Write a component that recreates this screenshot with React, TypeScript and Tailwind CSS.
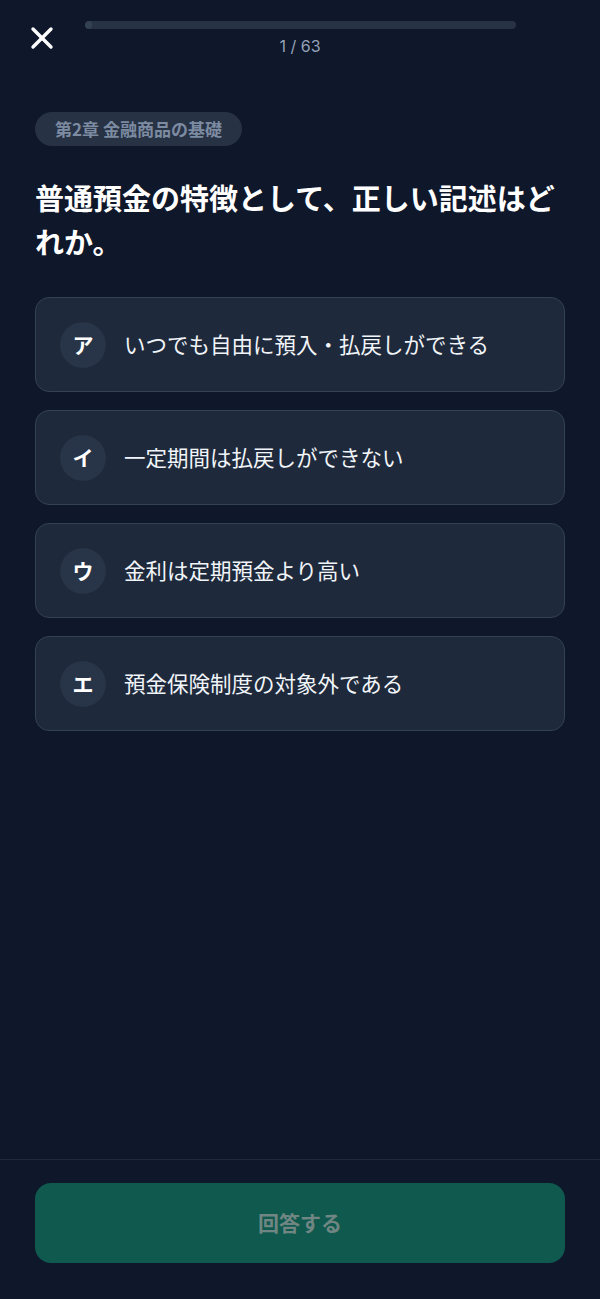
import React from "react"

const choices = [
  { label: "ア", text: "いつでも自由に預入・払戻しができる" },
  { label: "イ", text: "一定期間は払戻しができない" },
  { label: "ウ", text: "金利は定期預金より高い" },
  { label: "エ", text: "預金保険制度の対象外である" },
]

const font = {
  fontFamily: '"Noto Sans CJK JP", "Noto Sans", Inter, sans-serif',
}

export default function App() {
  return (
    <div className="min-h-[1299px] bg-[#0f172a] flex flex-col text-white" style={font}>
      {/* header */}
      <div className="relative h-[64px]">
        <button className="absolute left-[30px] top-[26px] text-white">
          <svg width="24" height="24" viewBox="0 0 24 24" fill="none" stroke="currentColor" strokeWidth="3.4" strokeLinecap="round">
            <path d="M3 3L21 21" />
            <path d="M21 3L3 21" />
          </svg>
        </button>
        <div className="mx-auto w-[431px] pt-[21px] flex flex-col items-center">
          <div className="h-[8px] w-full rounded-full bg-[#273244] overflow-hidden">
            <div className="h-full w-[7px] rounded-full bg-[#334155]" />
          </div>
          <div className="mt-[7px] text-[16px] leading-[20px] text-[#94a3b8] font-[Inter,sans-serif]">1 / 63</div>
        </div>
      </div>

      {/* body */}
      <div className="flex-1 px-[35px] pt-[48px]">
        <span className="inline-flex items-center h-[34px] px-[20px] rounded-full bg-[#273244] text-[17px] font-bold text-[#7c8ba1]">
          第2章 金融商品の基礎
        </span>
        <h1 className="mt-[29px] text-[29px] leading-[44px] font-bold text-white">
          普通預金の特徴として、正しい記述はどれか。
        </h1>
        <div className="mt-[34px] flex flex-col gap-[18px]">
          {choices.map(function (c) {
            return (
              <div
                key={c.label}
                className="h-[95px] rounded-[14px] border border-[#334155] bg-[#1e293b] flex items-center pl-[24px] pr-[20px] gap-[18px]"
              >
                <div className="w-[46px] h-[46px] rounded-full bg-[#283447] flex items-center justify-center text-[21px] font-bold text-white">
                  {c.label}
                </div>
                <div className="text-[21.5px] text-[#f1f5f9]">{c.text}</div>
              </div>
            )
          })}
        </div>
      </div>

      {/* footer */}
      <div className="border-t border-[#1e293b] px-[35px] pt-[23px] pb-[36px]">
        <button className="w-full h-[80px] rounded-[16px] bg-[#0f594e] text-[21px] font-bold text-[#6f8683]">
          回答する
        </button>
      </div>
    </div>
  )
}
